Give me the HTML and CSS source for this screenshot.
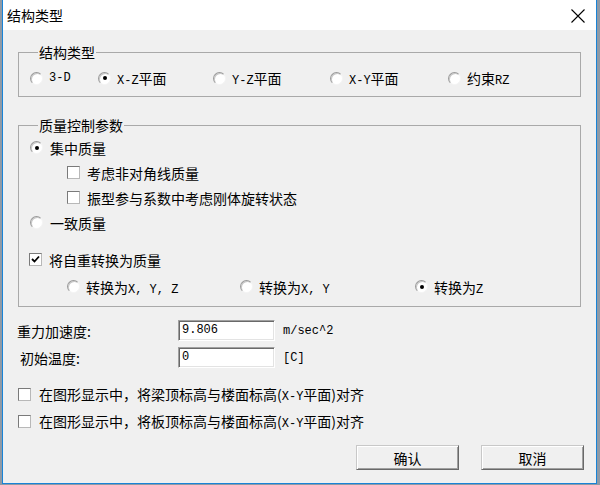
FILE: index.html
```html
<!DOCTYPE html>
<html lang="zh-CN">
<head>
<meta charset="utf-8">
<title>结构类型</title>
<link rel="stylesheet" href="styles.css">
</head>
<body>
<div class="window">
  <div class="titlebar">
    <span class="title">结构类型</span>
    <svg class="close" width="14" height="14" viewBox="0 0 14 14"><path d="M0.5 0.5 L13.5 13.5 M13.5 0.5 L0.5 13.5" stroke="#000" stroke-width="1.1" fill="none"/></svg>
  </div>
  <div class="content">
    <fieldset class="group g1">
      <legend>结构类型</legend>
      <div class="type-row">
        <span class="opt"><span class="radio"></span><span class="m">3-D</span></span>
        <span class="opt"><span class="radio on"></span><span><span class="m">X-Z</span>平面</span></span>
        <span class="opt"><span class="radio"></span><span><span class="m">Y-Z</span>平面</span></span>
        <span class="opt"><span class="radio"></span><span><span class="m">X-Y</span>平面</span></span>
        <span class="opt"><span class="radio"></span><span>约束<span class="m">RZ</span></span></span>
      </div>
    </fieldset>

    <fieldset class="group g2">
      <legend>质量控制参数</legend>
      <div class="row"><span class="radio on"></span><span>集中质量</span></div>
      <div class="row sub"><span class="check"></span><span>考虑非对角线质量</span></div>
      <div class="row sub"><span class="check"></span><span>振型参与系数中考虑刚体旋转状态</span></div>
      <div class="row"><span class="radio"></span><span>一致质量</span></div>
      <div class="row selfw"><span class="check on"><svg width="9" height="9" viewBox="0 0 9 9"><path d="M1 4 L3.5 6.5 L8 1.5" stroke="#000" stroke-width="1.8" fill="none"/></svg></span><span>将自重转换为质量</span></div>
      <div class="row conv">
        <span class="opt"><span class="radio"></span><span>转换为<span class="m">X, Y, Z</span></span></span>
        <span class="opt"><span class="radio"></span><span>转换为<span class="m">X, Y</span></span></span>
        <span class="opt"><span class="radio on"></span><span>转换为<span class="m">Z</span></span></span>
      </div>
    </fieldset>

    <div class="field-row first">
      <span class="flabel">重力加速度:</span>
      <span class="input m">9.806</span>
      <span class="unit m">m/sec^2</span>
    </div>
    <div class="field-row second">
      <span class="flabel">初始温度:</span>
      <span class="input m">0</span>
      <span class="unit m">[C]</span>
    </div>

    <div class="crow c1"><span class="check"></span><span>在图形显示中，将梁顶标高与楼面标高(<span class="m">X-Y</span>平面)对齐</span></div>
    <div class="crow c2"><span class="check"></span><span>在图形显示中，将板顶标高与楼面标高(<span class="m">X-Y</span>平面)对齐</span></div>

    <div class="buttons">
      <span class="btn">确认</span>
      <span class="btn">取消</span>
    </div>
  </div>
</div>
</body>
</html>
```

FILE: styles.css
```css
html, body {
  margin: 0;
  padding: 0;
}
body {
  background: #8f9aa6;
  width: 600px;
  height: 485px;
  overflow: hidden;
  font-family: "Noto Sans CJK SC", "Noto Sans", sans-serif;
  font-size: 14px;
  color: #000;
}
.window {
  margin-left: 2px;
  width: 595px;
  height: 484px;
  box-sizing: border-box;
  border: 1px solid #1883d7;
  border-top: none;
  background: #f0f0f0;
  display: flex;
  flex-direction: column;
}
.titlebar {
  height: 30px;
  background: #fff;
  display: flex;
  align-items: center;
  padding-left: 4px;
  flex: none;
}
.title {
  font-size: 14px;
  line-height: 18px;
}
.close {
  margin-left: auto;
  margin-right: 11px;
  margin-top: 1px;
}
.content {
  padding: 0 15px;
  flex: 1;
}
.m {
  font-family: "Liberation Mono", "DejaVu Sans Mono", monospace;
  font-size: 12px;
}
.group {
  margin: 0;
  border: 1px solid #a9a9a9;
  min-width: 0;
}
.group legend {
  margin-left: 8px;
  padding: 0 1px;
  line-height: 18px;
}
.g1 {
  margin-top: 13px;
  padding: 7px 10px 10px 11px;
}
.type-row {
  display: grid;
  grid-template-columns: 68px 115px 117px 118px 1fr;
  height: 18px;
  align-items: center;
}
.opt {
  display: flex;
  align-items: center;
  gap: 6px;
  white-space: nowrap;
}
.radio {
  width: 13px;
  height: 13px;
  flex: none;
  box-sizing: border-box;
  border-radius: 50%;
  background: #fff;
  border: 1px solid;
  border-color: #9a9a9a #f4f4f4 #f4f4f4 #9a9a9a;
  box-shadow: inset 1px 1px 0 #c8c8c8;
  display: flex;
  align-items: center;
  justify-content: center;
}
.radio.on::after {
  content: "";
  width: 4px;
  height: 4px;
  border-radius: 50%;
  background: #000;
}
.check {
  width: 13px;
  height: 13px;
  flex: none;
  box-sizing: border-box;
  background: #fff;
  border: 1px solid;
  border-color: #7a7a7a #b8b8b8 #b8b8b8 #7a7a7a;
  display: flex;
  align-items: center;
  justify-content: center;
}
.g2 {
  margin-top: 19px;
  padding: 1px 10px 7px 11px;
}
.row {
  display: flex;
  align-items: center;
  gap: 7px;
  height: 25px;
}
.row.sub {
  padding-left: 37px;
}
.row.selfw {
  margin-top: 12px;
  margin-left: -1px;
}
.row.conv {
  margin-top: 2px;
  padding-left: 37px;
  display: grid;
  gap: 0;
  grid-template-columns: 173px 175px 1fr;
}
.conv .opt {
  gap: 6px;
}
.field-row {
  display: flex;
  align-items: center;
  height: 21px;
}
.field-row.first {
  margin-top: 13px;
  margin-left: -1px;
}
.field-row.second {
  margin-top: 6px;
  margin-left: -1px;
}
.flabel {
  width: 161px;
  flex: none;
}
.second .flabel {
  padding-left: 3px;
  width: 158px;
}
.input {
  width: 97px;
  height: 21px;
  box-sizing: border-box;
  background: #fff;
  border: 1px solid;
  border-color: #a0a0a0 #fff #fff #a0a0a0;
  box-shadow: inset 1px 1px 0 #696969, inset -1px -1px 0 #e3e3e3;
  padding-left: 3px;
  line-height: 19px;
  flex: none;
}
.unit {
  margin-left: 8px;
}
.crow {
  display: flex;
  align-items: center;
  gap: 8px;
  height: 24px;
}
.crow.c1 {
  margin-top: 14px;
}
.crow.c2 {
  margin-top: 3px;
}
.buttons {
  display: flex;
  justify-content: flex-end;
  gap: 22px;
  margin-top: 12px;
  margin-right: -3px;
}
.btn {
  width: 103px;
  height: 25px;
  box-sizing: border-box;
  display: flex;
  align-items: center;
  justify-content: center;
  background: #f0f0f0;
  border: 1px solid;
  border-color: #c8c8c8 #696969 #696969 #c8c8c8;
  box-shadow: inset 1px 1px 0 #fff, inset -1px -1px 0 #a0a0a0;
}
```
